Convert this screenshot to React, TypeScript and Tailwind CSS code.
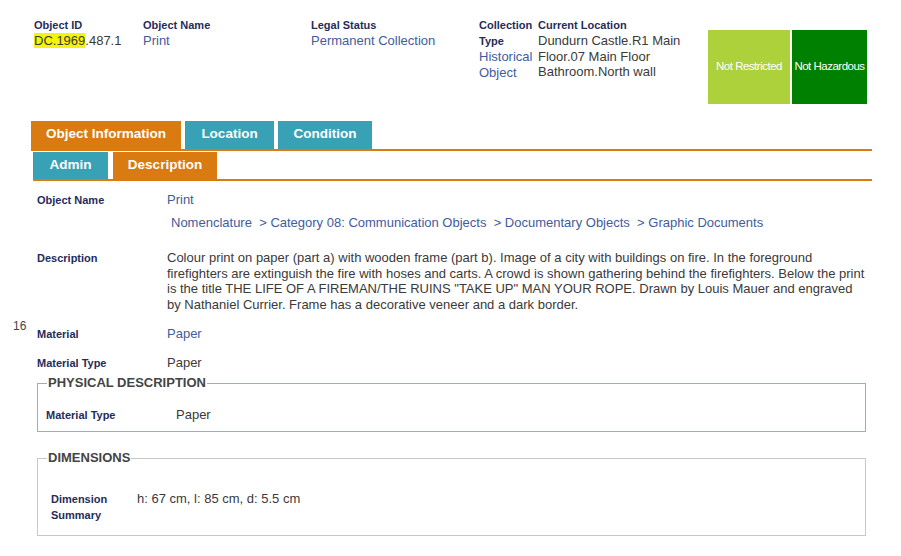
import React from "react";

const font = { fontFamily: '"Liberation Sans", Arial, sans-serif' };

function HeadField({ label, children, width }: { label: string; children: React.ReactNode; width: string }) {
  return (
    <div className={width}>
      <div className="text-[11px] font-bold leading-[16px] text-[#1f2d5a]">{label}</div>
      <div className="text-[13px] leading-[15.5px]">{children}</div>
    </div>
  );
}

function Tab({ label, active, width }: { label: string; active?: boolean; width: string }) {
  return (
    <div
      className={`${width} flex items-center justify-center text-[13.5px] font-bold text-white ${
        active ? "bg-[#d97b10]" : "bg-[#39a1b5]"
      }`}
    >
      {label}
    </div>
  );
}

function Label({ children, width = "w-[130px]" }: { children: React.ReactNode; width?: string }) {
  return <div className={`${width} shrink-0 text-[11px] font-bold leading-[16px] text-[#1f2d5a]`}>{children}</div>;
}

export default function App() {
  return (
    <div className="w-[901px] h-[556px] overflow-hidden bg-white text-[#3a3a3a]" style={font}>
      {/* header */}
      <div className="flex items-start pt-[17px] pl-[34px]">
        <HeadField label="Object ID" width="w-[109px]">
          <span className="bg-[#f5f20c]">DC.1969</span>.487.1
        </HeadField>
        <HeadField label="Object Name" width="w-[168px]">
          <span className="text-[#3f5c9c]">Print</span>
        </HeadField>
        <HeadField label="Legal Status" width="w-[168px]">
          <span className="text-[#3f5c9c]">Permanent Collection</span>
        </HeadField>
        <div className="w-[59px]">
          <div className="text-[11px] font-bold leading-[16px] text-[#1f2d5a]">
            Collection
            <br />
            Type
          </div>
          <div className="text-[13px] leading-[15.5px] text-[#3f5c9c]">
            Historical
            <br />
            Object
          </div>
        </div>
        <HeadField label="Current Location" width="w-[170px]">
          Dundurn Castle.R1 Main
          <br />
          Floor.07 Main Floor
          <br />
          Bathroom.North wall
        </HeadField>
        <div className="mt-[13px] flex gap-[2px]">
          <div className="w-[82px] h-[74px] bg-[#acd13a] flex items-center justify-center text-[11.5px] tracking-[-0.5px] text-white">
            Not Restricted
          </div>
          <div className="w-[75px] h-[74px] bg-[#008000] flex items-center justify-center text-[11.5px] tracking-[-0.5px] text-white">
            Not Hazardous
          </div>
        </div>
      </div>

      {/* tabs */}
      <div className="ml-[31px] w-[841px] mt-[17px]">
        <div className="flex gap-[4px] h-[28px] [&>div]:pb-[2px]">
          <Tab label="Object Information" active width="w-[150px]" />
          <Tab label="Location" width="w-[89px]" />
          <Tab label="Condition" width="w-[94px]" />
        </div>
        <div className="h-[2px] bg-[#d97b10]" />
        <div className="ml-[2px] mt-[1px] flex gap-[5px] h-[27px]">
          <Tab label="Admin" width="w-[75px]" />
          <Tab label="Description" active width="w-[104px]" />
        </div>
        <div className="ml-[2px] h-[2px] bg-[#d97b10]" />
      </div>

      {/* content */}
      <div className="ml-[37px] w-[829px] text-[13px]">
        <div className="mt-[11px] flex">
          <Label>Object Name</Label>
          <div>
            <div className="leading-[16px] text-[#3f5c9c]">Print</div>
            <div className="mt-[7px] ml-[4px] leading-[16px] text-[#3f5c9c]">
              Nomenclature{"\u00a0\u00a0"}&gt; Category 08: Communication Objects{"\u00a0\u00a0"}&gt; Documentary Objects
              {"\u00a0\u00a0"}&gt; Graphic Documents
            </div>
          </div>
        </div>

        <div className="mt-[19px] flex">
          <Label>Description</Label>
          <div className="flex-1 leading-[15.5px]">
            Colour print on paper (part a) with wooden frame (part b). Image of a city with buildings on fire. In the foreground
            firefighters are extinguish the fire with hoses and carts. A crowd is shown gathering behind the firefighters. Below the print
            is the title THE LIFE OF A FIREMAN/THE RUINS "TAKE UP" MAN YOUR ROPE. Drawn by Louis Mauer and engraved by Nathaniel
            Currier. Frame has a decorative veneer and a dark border.
          </div>
        </div>

        <div className="mt-[14px] flex">
          <span className="-ml-[24px] w-[24px] -mt-[8px] text-[12px] leading-[16px] text-[#444]">16</span>
          <Label>Material</Label>
          <div className="leading-[16px] text-[#3f5c9c]">Paper</div>
        </div>

        <div className="mt-[13px] flex">
          <Label>Material Type</Label>
          <div className="leading-[16px]">Paper</div>
        </div>

        <fieldset className="mt-[4px] border border-[#a3adab] pl-[8px] pr-[8px] pb-[8px]">
          <legend className="ml-[1px] px-[1px] text-[13px] font-bold leading-[16px] text-[#444]">PHYSICAL DESCRIPTION</legend>
          <div className="pt-[16px] flex">
            <Label>Material Type</Label>
            <div className="leading-[16px]">Paper</div>
          </div>
        </fieldset>

        <fieldset className="mt-[18px] border border-[#c3cac8] pl-[13px] pr-[8px] pb-[12px]">
          <legend className="-ml-[4px] px-[1px] text-[13px] font-bold leading-[16px] text-[#444]">DIMENSIONS</legend>
          <div className="pt-[25px] flex">
            <Label width="w-[86px]">
              Dimension
              <br />
              Summary
            </Label>
            <div className="leading-[16px]">h: 67 cm, l: 85 cm, d: 5.5 cm</div>
          </div>
        </fieldset>
      </div>
    </div>
  );
}
